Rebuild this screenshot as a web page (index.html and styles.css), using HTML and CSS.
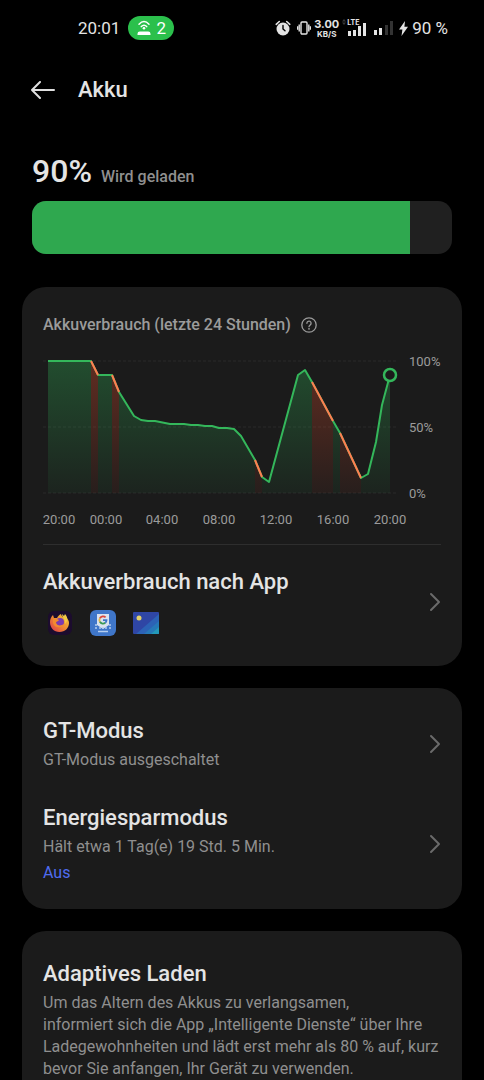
FILE: index.html
```
<!DOCTYPE html>
<html lang="de">
<head>
    <meta charset="UTF-8">
    <meta name="viewport" content="width=device-width, initial-scale=1">
    <title>Akku</title>
    <link rel="stylesheet" href="styles.css">
</head>
<body>
<div class="screen">
    <div class="status">
        <div class="status-left">
            <span>20:01</span>
            <span class="hotspot">
                <svg width="14" height="16" viewBox="0 0 14 16" fill="none" stroke="#fff" stroke-width="1.5" stroke-linecap="round">
                    <path d="M2 4.2Q7-1.2 12 4.2M4.3 6.600Q7 3.8 9.7 6.600"/>
                    <circle cx="7" cy="8.2" r="1.3" fill="#fff" stroke="none"/>
                    <path d="M.5 15v-1.2a2.3 2.3 0 0 1 2.3-2.3h8.4a2.3 2.3 0 0 1 2.3 2.3V15z" fill="#fff" stroke="none"/>
                </svg>
                <span>2</span>
            </span>
        </div>
        <div class="status-right">
            <svg width="16" height="16" viewBox="0 0 16 16">
                <circle cx="8" cy="9" r="6.5" fill="#e4e4e4"/>
                <path d="M1.2 4.3 4.3 1.5M14.8 4.3l-3.1-2.8" stroke="#e4e4e4" stroke-width="1.6" stroke-linecap="round"/>
                <path d="M8 5.5V9l2 1.8" fill="none" stroke="#000" stroke-width="1.4" stroke-linecap="round"/>
            </svg>
            <span class="network">
                <svg width="14" height="14" viewBox="0 0 14 14" fill="none" stroke="#e4e4e4" stroke-width="1.4">
                    <rect x="4" y="1" width="6" height="12" rx="1"/>
                    <path d="M2.2 3.5v7M11.8 3.5v7M.5 5.3v3.4M13.5 5.3v3.4"/>
                </svg>
                <span class="speed"><span>3.00</span><span>KB/S</span></span>
                <span class="signal">
                    <span class="lte">LTE</span>
                    <svg width="26" height="18" viewBox="0 0 26 18">
                        <path d="M2 0 4 2.5H0zM2 6 0 3.5h4z" fill="#3a3a3a"/>
                        <path d="M6 12h3v5H6zM11 11h3v6h-3zM16 7h3v10h-3zM21 4h3v13h-3z" fill="#e4e4e4"/>
                    </svg>
                </span>
            </span>
            <svg width="19" height="14" viewBox="0 0 19 14">
                <path d="M0 9h3v5H0zM5 7h3v7H5z" fill="#e4e4e4"/>
                <path d="M11 4h3v10h-3zM16 0h3v14h-3z" fill="#333"/>
            </svg>
            <span class="charge">
                <svg width="9" height="15" viewBox="0 0 9 15"><path d="M6 0 0 8.5h3.4L2.5 15 9 5.8H5.4z" fill="#e4e4e4"/></svg>
                <span>90 %</span>
            </span>
        </div>
    </div>

    <header class="header">
        <button class="back" type="button" aria-label="Zurück">
            <svg width="24" height="18" viewBox="0 0 24 18" fill="none" stroke="#e0e0e0" stroke-width="2" stroke-linecap="round" stroke-linejoin="round">
                <path d="M23 9H1M9 1 1 9l8 8"/>
            </svg>
        </button>
        <h1>Akku</h1>
    </header>

    <main>
        <section class="level">
            <div class="level-text">
                <strong>90%</strong>
                <span>Wird geladen</span>
            </div>
            <div class="battery">
                <div class="battery-fill" style="width: 90%"></div>
            </div>
        </section>

        <section class="card usage">
            <div class="usage-title">
                <h2>Akkuverbrauch (letzte 24 Stunden)</h2>
                <button class="help" type="button" aria-label="Hilfe">
                    <svg width="16" height="16" viewBox="0 0 16 16" fill="none" stroke="#9b9b9b" stroke-width="1.3" stroke-linecap="round">
                        <circle cx="8" cy="8" r="7.2"/>
                        <path d="M5.9 6.3a2.1 2.1 0 1 1 3.3 1.6C8.4 8.5 8 8.8 8 9.7"/>
                        <circle cx="8" cy="11.8" r=".9" fill="#9b9b9b" stroke="none"/>
                    </svg>
                </button>
            </div>

            <svg class="chart" viewBox="0 0 398 190" role="img" aria-label="Akkustand der letzten 24 Stunden">
                <defs>
                    <linearGradient id="green" x1="0" y1="16" x2="0" y2="148" gradientUnits="userSpaceOnUse">
                        <stop offset="0" stop-color="#2fae55" stop-opacity=".34"/>
                        <stop offset="1" stop-color="#2fae55" stop-opacity=".06"/>
                    </linearGradient>
                    <linearGradient id="red" x1="0" y1="16" x2="0" y2="148" gradientUnits="userSpaceOnUse">
                        <stop offset="0" stop-color="#e8502e" stop-opacity=".34"/>
                        <stop offset="1" stop-color="#e8502e" stop-opacity=".06"/>
                    </linearGradient>
                </defs>
                <path class="grid" d="M0 16h355M0 82h355M0 148h355"/>
                <!-- areas below the curve -->
                <g fill="url(#green)">
                    <path d="M5 148V16h43v132z"/>
                    <path d="M55 148V30h14v118z"/>
                    <path d="M76 148V47l15 24 7 4 7 1h7l15 3h14l7 1h7l7 1h7l7 2h8l7 1 7 7 7 12 7 12v33z"/>
                    <path d="M219 148v-16l7 5 29-107 7-5 7 12v111z"/>
                    <path d="M290 148V76l7 12v60z"/>
                    <path d="M318 148v-15l7-4 8-32 6-37 8-30v118z"/>
                </g>
                <g fill="url(#red)">
                    <path d="M48 148V16l7 14v118z"/>
                    <path d="M69 148V30l7 17v101z"/>
                    <path d="M212 148v-33l7 17v16z"/>
                    <path d="M269 148V37l21 39v72z"/>
                    <path d="M297 148V88l21 45v15z"/>
                </g>
                <path class="line" d="M5 16h43l7 14h14l7 17 15 24 7 4 7 1h7l15 3h14l7 1h7l7 1h7l7 2h8l7 1 7 7 7 12 7 12 7 17 7 5 29-107 7-5 7 12 21 39 7 12 21 45 7-4 8-32 6-37 8-30"/>
                <path class="line line-hot" d="M48 16l7 14M69 30l7 17M212 115l7 17M269 37l21 39M297 88l21 45"/>
                <circle cx="347" cy="30" r="6" fill="#1b1b1b" stroke="#34b75b" stroke-width="2.5"/>
                <g class="label">
                    <text x="366" y="21">100%</text>
                    <text x="366" y="87">50%</text>
                    <text x="366" y="153">0%</text>
                </g>
                <g class="label label-time">
                    <text x="16" y="179">20:00</text>
                    <text x="63" y="179">00:00</text>
                    <text x="119" y="179">04:00</text>
                    <text x="176" y="179">08:00</text>
                    <text x="233" y="179">12:00</text>
                    <text x="290" y="179">16:00</text>
                    <text x="347" y="179">20:00</text>
                </g>
            </svg>

            <button class="row row-apps" type="button">
                <span class="row-text">
                    <span class="row-title">Akkuverbrauch nach App</span>
                    <span class="apps">
                        <svg width="26" height="26" viewBox="0 0 26 26">
                            <defs>
                                <linearGradient id="fox" x1="1" y1="0" x2="0" y2="1">
                                    <stop offset="0" stop-color="#f5d33c"/>
                                    <stop offset=".5" stop-color="#ee8a32"/>
                                    <stop offset="1" stop-color="#dc3450"/>
                                </linearGradient>
                            </defs>
                            <rect width="24" height="24" x="1" y="1" rx="6" fill="#1c0c2e"/>
                            <path d="M3 12c0-3 1-5 3-7l1 3h3c1-2 2-3 4-4 0 2 2 3 4 4l1-1c2 2 3 4 3 6 0 5-4 9-9.500 9S3 18 3 12z" fill="url(#fox)"/>
                            <circle cx="13" cy="12" r="4" fill="#7a3bb0"/>
                            <path d="M6 9c3-1 4 0 6 1-1 2-3 1-3 3 1 3 5 3 8 1-2 5-10 4-11-1z" fill="#f18a30"/>
                            <path d="M15 4c0 4 4 5 3 10 3-3 3-7 0-10l-1 2z" fill="#f3ca48"/>
                        </svg>
                        <svg width="26" height="26" viewBox="0 0 26 26">
                            <rect width="26" height="26" rx="6" fill="#3f76c9"/>
                            <path d="M7 4h12v11l-6 4-6-4z" fill="#d9e2ee"/>
                            <g fill="none" stroke-width="1.8">
                                <path d="M15.6 7.4A3.6 3.6 0 0 0 9.9 8.2" stroke="#d7483e"/>
                                <path d="M9.9 8.2a3.6 3.6 0 0 0 0 3.6" stroke="#e3b53c"/>
                                <path d="M9.9 11.8a3.6 3.6 0 0 0 5.4 1" stroke="#3c9a55"/>
                                <path d="M15.3 12.8a3.6 3.6 0 0 0 1.2-2.6H13" stroke="#3f76c9"/>
                            </g>
                            <path d="M5 15h2M5 18h2M9 18h2M12 18h2M15 18h2M19 15h2M19 18h2M8 21.5h10" stroke="#b4cdf0" stroke-width="1.5"/>
                        </svg>
                        <svg width="26" height="26" viewBox="0 0 26 26">
                            <rect y="2" width="26" height="22" rx="1" fill="#2f46a5"/>
                            <path d="M26 4v19a1 1 0 0 1-1 1H3z" fill="#2c62b6"/>
                            <path d="M26 11v12a1 1 0 0 1-1 1H11z" fill="#2678b8"/>
                            <path d="M26 17v6a1 1 0 0 1-1 1h-7z" fill="#2398b8"/>
                            <circle cx="6" cy="8" r="2.5" fill="#e3d069"/>
                        </svg>
                    </span>
                </span>
                <svg class="chevron" width="12" height="20" viewBox="0 0 12 20"><path d="M2 2l8 8-8 8"/></svg>
            </button>
        </section>

        <section class="card modes">
            <button class="row" type="button">
                <span class="row-text">
                    <span class="row-title">GT-Modus</span>
                    <span class="row-info">GT-Modus ausgeschaltet</span>
                </span>
                <svg class="chevron" width="12" height="20" viewBox="0 0 12 20"><path d="M2 2l8 8-8 8"/></svg>
            </button>
            <button class="row" type="button">
                <span class="row-text">
                    <span class="row-title">Energiesparmodus</span>
                    <span class="row-info">Hält etwa 1 Tag(e) 19 Std. 5 Min.</span>
                    <span class="row-state">Aus</span>
                </span>
                <svg class="chevron" width="12" height="20" viewBox="0 0 12 20"><path d="M2 2l8 8-8 8"/></svg>
            </button>
        </section>

        <section class="card adaptive">
            <h2 class="row-title">Adaptives Laden</h2>
            <p class="row-info">Um das Altern des Akkus zu verlangsamen,<br>informiert sich die App „Intelligente Dienste“ über Ihre Ladegewohnheiten und lädt erst mehr als 80 % auf, kurz bevor Sie anfangen, Ihr Gerät zu verwenden.</p>
        </section>
    </main>
</div>
</body>
</html>
```

FILE: styles.css
```
* {
    margin: 0;
    padding: 0;
    box-sizing: border-box;
}

body {
    background-color: #000;
    color: #e4e4e4;
    font-family: Roboto, "Liberation Sans", sans-serif;
    font-size: 16px;
    line-height: 22px;
}

button {
    border: none;
    background: none;
    color: inherit;
    font: inherit;
    text-align: left;
    cursor: pointer;
}

svg {
    display: block;
    flex-shrink: 0;
}

.screen {
    height: 100vh;
    overflow-y: auto;
    scrollbar-width: none;
}

/* status bar */
.status {
    display: flex;
    justify-content: space-between;
    align-items: center;
    height: 56px;
    padding: 0 36px 0 78px;
    font-size: 17px;
}

.status-left,
.status-right {
    display: flex;
    align-items: center;
    gap: 8px;
}

.status-right {
    gap: 6px;
}

.hotspot {
    display: flex;
    align-items: center;
    justify-content: center;
    gap: 6px;
    width: 46px;
    height: 24px;
    border-radius: 12px;
    background-color: #2bc04c;
    color: #fff;
}

.network {
    display: flex;
    align-items: center;
    gap: 3px;
}

.speed {
    display: flex;
    flex-direction: column;
    align-items: center;
    font-family: Inter, sans-serif;
    font-size: 8px;
    font-weight: 700;
    line-height: 8px;
}

.speed span:first-child {
    font-size: 11px;
    line-height: 11px;
}

.signal {
    position: relative;
}

.lte {
    position: absolute;
    left: 5px;
    top: 0;
    font-family: Inter, sans-serif;
    font-size: 7px;
    font-weight: 700;
    line-height: 8px;
}

.charge {
    display: flex;
    align-items: center;
    gap: 4px;
}

/* title bar */
.header {
    display: flex;
    align-items: center;
    gap: 23px;
    height: 68px;
    padding: 0 31px;
}

.header h1 {
    font-size: 22px;
    font-weight: 500;
    line-height: 24px;
}

/* battery level */
.level {
    padding: 27px 32px 33px;
}

.level-text {
    display: flex;
    align-items: baseline;
    gap: 9px;
    margin-bottom: 10px;
    color: #8f8f8f;
    font-weight: 500;
}

.level-text strong {
    color: #e4e4e4;
    font-size: 32px;
    font-weight: 500;
    line-height: 40px;
}

.battery {
    height: 53px;
    border-radius: 14px;
    background-color: #202020;
    overflow: hidden;
}

.battery-fill {
    height: 100%;
    background-color: #2fa84f;
}

/* cards */
.card {
    margin: 0 22px 22px;
    padding: 29px 21px 25px;
    border-radius: 24px;
    background-color: #1b1b1b;
}

.usage {
    padding: 27px 21px 30px;
}

.usage-title {
    display: flex;
    align-items: center;
    gap: 10px;
    margin-bottom: 9px;
    color: #9b9b9b;
}

.usage-title h2 {
    font-size: 16px;
    font-weight: 500;
}

.chart {
    width: 100%;
    height: auto;
}

.grid {
    fill: none;
    stroke: #2a2a2a;
    stroke-dasharray: 3 2;
}

.line {
    fill: none;
    stroke: #34b75b;
    stroke-width: 2;
    stroke-linejoin: round;
}

.line-hot {
    stroke: #ff7d50;
}

.label {
    fill: #9b9b9b;
    font-size: 13px;
}

.label-time {
    text-anchor: middle;
}

.row {
    display: flex;
    justify-content: space-between;
    align-items: center;
    width: 100%;
}

.row-apps {
    margin-top: 9px;
    padding-top: 23px;
    border-top: 1px solid #2e2e2e;
}

.row-text {
    display: flex;
    flex-direction: column;
    gap: 4px;
}

.row-title {
    font-size: 22px;
    font-weight: 500;
    line-height: 28px;
}

.row-info {
    color: #8f8f8f;
}

.row-state {
    color: #4f6cf0;
}

.chevron {
    fill: none;
    stroke: #6b6b6b;
    stroke-width: 2;
    stroke-linecap: round;
    stroke-linejoin: round;
}

.apps {
    display: flex;
    gap: 17px;
    margin-top: 10px;
    padding-left: 4px;
}

.modes {
    display: flex;
    flex-direction: column;
    gap: 33px;
}

.adaptive {
    display: flex;
    flex-direction: column;
    gap: 4px;
}
```
